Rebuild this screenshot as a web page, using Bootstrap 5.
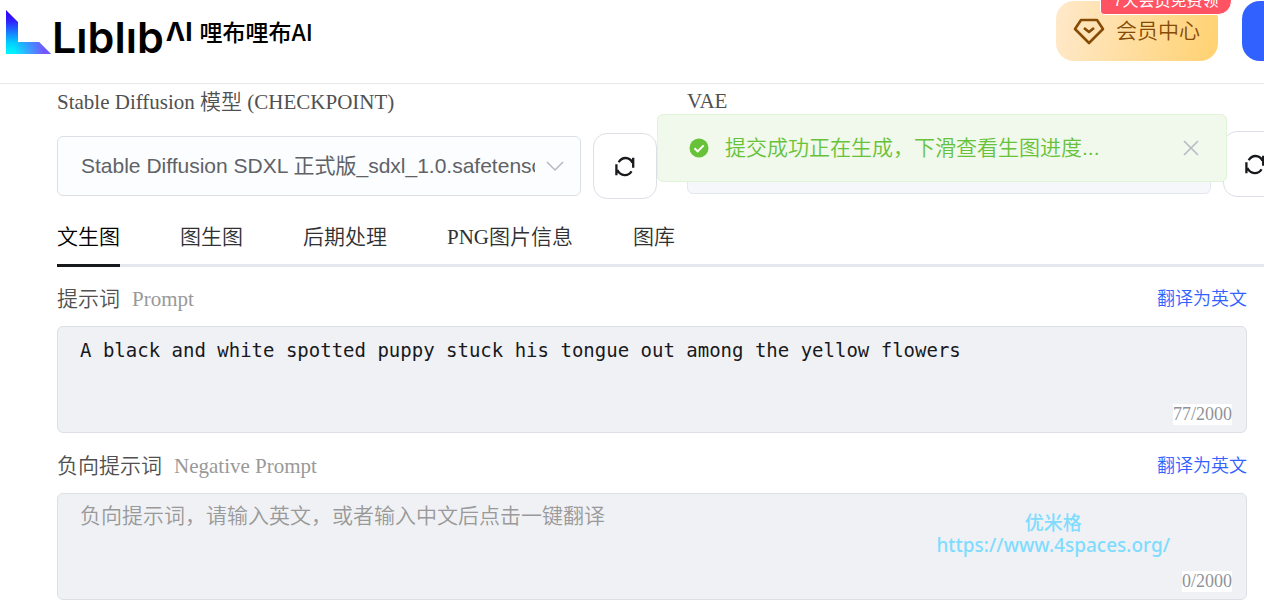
<!DOCTYPE html>
<html lang="zh-CN">
<head>
<meta charset="utf-8">
<meta name="viewport" content="width=device-width, initial-scale=1">
<title>LiblibAI 哩布哩布AI</title>
<link href="https://cdn.jsdelivr.net/npm/bootstrap@5.3.0/dist/css/bootstrap.min.css" rel="stylesheet">
<style>
  :root { --line: #dcdfe6; --serif: "Liberation Serif", "Noto Sans CJK SC", serif; --sans: "Liberation Sans", "Noto Sans CJK SC", sans-serif; }
  body { font-family: var(--serif); font-size: 21px; font-weight: 350; line-height: 30px; color: #505050; overflow-x: hidden; }
  .site-header { height: 84px; border-bottom: 1px solid #e8e8e8; padding-left: 6px; }
  .brand { height: 60px; color: #000; }
  .brand-mark { width: 45px; height: 45px; margin-top: 10px; }
  .brand-word { font: 600 43px/52px Inter, sans-serif; margin: 11px 0 0 1px; }
  .brand-sup { font: 700 26px/30px Inter, sans-serif; margin: 17px 0 0 2px; }
  .brand-cn { font: 500 23px/30px "Noto Sans CJK SC", sans-serif; margin: 16px 0 0 7px; }
  .vip-btn { width: 162px; height: 60px; margin-top: 1px; border-radius: 18px; background: linear-gradient(100deg, #ffe9cb, #ffd170); color: #864b05; font: 350 21px/30px var(--sans); padding: 0 18px 0 17px; }
  .vip-btn svg { width: 32px; height: 27px; }
  .vip-tag { top: -17px; right: -14px; height: 31px; width: 132px; border: 1px solid #fff; border-radius: 14px 14px 14px 4px; background: #ff5262; color: #fff; font: 400 16px/31px var(--sans); }
  .login-btn { width: 22px; height: 60px; margin-top: 1px; border-radius: 18px 0 0 18px; background: #3162ff; }
  .workspace { padding-left: 57px; }
  .models { gap: 30px; margin-right: -23px; padding-top: 3px; }
  .models label { display: block; margin-bottom: 16px; }
  .latin-label { line-height: 28px; }
  .model-select { height: 60px; border: 1px solid var(--line); border-radius: 6px; padding: 0 45px 0 23px; font: 400 21px/30px var(--sans); color: #606266; background-color: #fbfdff; background-size: 20px 20px; background-position: right 15px center;
    background-image: url("data:image/svg+xml,%3Csvg xmlns='http://www.w3.org/2000/svg' viewBox='0 0 20 20'%3E%3Cpath d='M2 6l8 8 8-8' fill='none' stroke='%23b4b8c0' stroke-width='1.5'/%3E%3C/svg%3E"); text-overflow: clip; }
  .model-select:disabled { background-color: #f5f7fa; border-color: #e4e7ed; }
  .reload-btn { width: 64px; height: 66px; border: 1px solid var(--line); border-radius: 14px; background: #fff; }
  .reload-btn svg { width: 22px; height: 22px; }
  .toast-ok { top: 114px; right: 37px; width: 570px; height: 68px; border: 1px solid #e1f3d8; border-radius: 6px; background: #f0f9eb; color: #67c23a; padding: 0 26px 0 31px; font: 350 21px/30px var(--sans); z-index: 5; }
  .mode-tabs { margin-top: 8px; height: 60px; border-bottom: 3px solid #e4e7ed; gap: 60px; }
  .mode-tabs .nav-link { padding: 0; height: 60px; line-height: 60px; color: #303133; border-radius: 0; }
  .mode-tabs .nav-link.active { color: #000; border-bottom: 3px solid #18191c; }
  .prompts { gap: 16px; padding: 15px 17px 0 0; }
  .prompt-head { height: 34px; margin-bottom: 10px; }
  .prompt-head small { font-size: 21px; font-weight: 400; color: #999; margin-left: 12px; }
  .translate { font: 350 18px/32px var(--sans); color: #3162ff; }
  .prompt-box { display: block; height: 107px; resize: none; border: 1px solid var(--line); border-radius: 6px; background: #f0f1f5 !important; padding: 7px 22px; color: #18191c; font: 350 21px/30px var(--sans); }
  .prompt-box::placeholder { color: #999; opacity: 1; }
  .code-text { font: 400 19px/32px "DejaVu Sans Mono", monospace; }
  .counter { right: 15px; bottom: 8px; background: #fff; color: #909399; font-size: 18px; font-weight: 400; line-height: 21px; }
  .watermark { right: 77px; top: 19px; color: #7fdcff; font: 500 19px/22px "Noto Sans", "Noto Sans CJK SC", sans-serif; pointer-events: none; }
</style>
</head>
<body>
<svg class="d-none" aria-hidden="true">
  <symbol id="reload" viewBox="0 0 22 22"><path d="M4.700 7.300C8 1.500 15.500 1.500 18.500 7.800M19.200 2.700V12.700M17.500 16.200C14.500 21.500 6.500 21.500 3.300 15M2.400 9.300V20.300" fill="none" stroke="#18191c" stroke-width="2.300"/></symbol>
</svg>
<header class="site-header d-flex justify-content-between align-items-start">
  <a href="#" class="brand d-flex align-items-start text-decoration-none">
    <svg class="brand-mark" viewBox="0 0 45 45" aria-hidden="true">
      <defs>
        <linearGradient id="up" gradientUnits="userSpaceOnUse" x1="0" y1="44" x2="0" y2="0"><stop offset="0" stop-color="#00f8ff"/><stop offset=".25" stop-color="#00d0ff"/><stop offset=".75" stop-color="#3020ff"/><stop offset="1" stop-color="#3200f8"/></linearGradient>
        <linearGradient id="across" gradientUnits="userSpaceOnUse" x1="8" y1="0" x2="45" y2="0"><stop offset="0" stop-color="#7a50ff" stop-opacity="0"/><stop offset=".8" stop-color="#7a50ff" stop-opacity=".95"/><stop offset="1" stop-color="#7a50ff"/></linearGradient>
      </defs>
      <path d="M0 0l12 12v20h21l12 12H0z" fill="url(#up)"/>
      <path d="M8 32h25l12 12H8z" fill="url(#across)"/>
    </svg>
    <span class="brand-word">Lıblıb</span><span class="brand-sup">ΛI</span><span class="brand-cn">哩布哩布AI</span>
  </a>
  <div class="d-flex gap-4">
    <button type="button" class="vip-btn btn border-0 position-relative d-flex align-items-center">
      <svg viewBox="0 0 32 27" fill="none" stroke="currentColor" stroke-width="2.6" stroke-linejoin="round" aria-hidden="true"><path d="M8 2h16l6 9-14 14L2 11z"/><path d="M11 10l5 4 5-4"/></svg>
      <span class="ms-auto">会员中心</span>
      <span class="vip-tag position-absolute text-center">7天会员免费领</span>
    </button>
    <button type="button" class="login-btn border-0 p-0" aria-label="登录"></button>
  </div>
</header>

<div class="toast-ok position-absolute d-flex align-items-center" role="status">
  <svg width="20" height="20" viewBox="0 0 20 20" aria-hidden="true"><circle cx="10" cy="10" r="9.500" fill="#67c23a"/><path d="M5.500 10.200l3.200 3.200 6-6" fill="none" stroke="#fff" stroke-width="2"/></svg>
  <span class="ms-3">提交成功正在生成，下滑查看生图进度...</span>
  <button type="button" class="btn border-0 p-0 ms-auto d-flex" aria-label="关闭"><svg width="18" height="18" viewBox="0 0 18 18" fill="none" stroke="#b8bcc4" stroke-width="1.700"><path d="M2 2l14 14M16 2L2 16"/></svg></button>
</div>

<main class="workspace">
  <section class="models d-flex align-items-start">
    <div class="flex-fill w-50">
      <label for="ckpt">Stable Diffusion 模型 (CHECKPOINT)</label>
      <div class="d-flex align-items-center">
        <select id="ckpt" class="form-select model-select me-2"><option>Stable Diffusion SDXL 正式版_sdxl_1.0.safetensors</option></select>
        <button type="button" class="reload-btn flex-shrink-0 ms-1 p-0 d-flex align-items-center justify-content-center" aria-label="刷新模型"><svg aria-hidden="true"><use href="#reload"/></svg></button>
      </div>
    </div>
    <div class="flex-fill w-50">
      <label for="vae" class="latin-label">VAE</label>
      <div class="d-flex align-items-center">
        <select id="vae" class="form-select model-select me-2" disabled></select>
        <button type="button" class="reload-btn flex-shrink-0 ms-1 p-0 d-flex align-items-center justify-content-center" aria-label="刷新 VAE"><svg aria-hidden="true"><use href="#reload"/></svg></button>
      </div>
    </div>
  </section>

  <nav class="mode-tabs nav flex-nowrap text-nowrap">
    <a href="#" class="nav-link active" aria-current="page">文生图</a>
    <a href="#" class="nav-link">图生图</a>
    <a href="#" class="nav-link">后期处理</a>
    <a href="#" class="nav-link">PNG图片信息</a>
    <a href="#" class="nav-link">图库</a>
  </nav>

  <section class="prompts d-flex flex-column">
    <div>
      <div class="prompt-head d-flex align-items-center justify-content-between">
        <label for="prompt">提示词<small>Prompt</small></label>
        <a href="#" class="translate text-decoration-none">翻译为英文</a>
      </div>
      <div class="position-relative">
        <textarea id="prompt" class="form-control prompt-box code-text">A black and white spotted puppy stuck his tongue out among the yellow flowers</textarea>
        <span class="counter position-absolute">77/2000</span>
      </div>
    </div>
    <div>
      <div class="prompt-head d-flex align-items-center justify-content-between">
        <label for="negative">负向提示词<small>Negative Prompt</small></label>
        <a href="#" class="translate text-decoration-none">翻译为英文</a>
      </div>
      <div class="position-relative">
        <textarea id="negative" class="form-control prompt-box" placeholder="负向提示词，请输入英文，或者输入中文后点击一键翻译"></textarea>
        <div class="watermark position-absolute text-center">优米格<br>https://www.4spaces.org/</div>
        <span class="counter position-absolute">0/2000</span>
      </div>
    </div>
  </section>
</main>
<script src="https://cdn.jsdelivr.net/npm/bootstrap@5.3.0/dist/js/bootstrap.bundle.min.js"></script>
</body>
</html>
